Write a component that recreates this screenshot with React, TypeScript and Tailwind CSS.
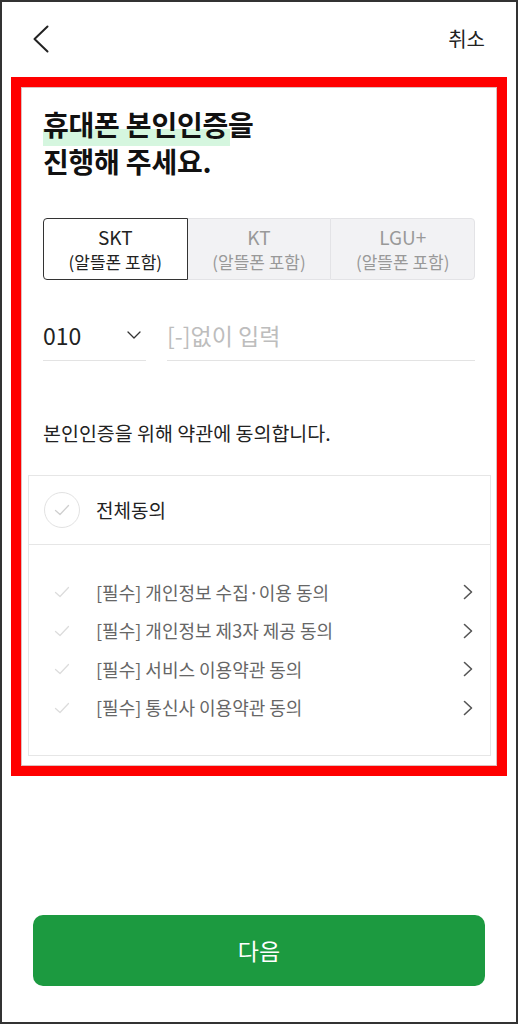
import React from "react";

const font = { fontFamily: '"Noto Sans CJK KR", "Noto Sans", sans-serif' };

function Check({ className = "" }: { className?: string }) {
  return (
    <svg viewBox="0 0 16 12" className={className} fill="none">
      <path d="M1.5 6.5 L6 10.5 L14.5 1.5" stroke="currentColor" strokeWidth="1.3" strokeLinecap="round" strokeLinejoin="round" />
    </svg>
  );
}

function ChevronRight() {
  return (
    <svg viewBox="0 0 10 16" className="w-[10px] h-[16px] text-[#555]" fill="none">
      <path d="M1.5 1.5 L8.5 8 L1.5 14.5" stroke="currentColor" strokeWidth="1.6" strokeLinecap="round" strokeLinejoin="round" />
    </svg>
  );
}

const terms = [
  "[필수] 개인정보 수집·이용 동의",
  "[필수] 개인정보 제3자 제공 동의",
  "[필수] 서비스 이용약관 동의",
  "[필수] 통신사 이용약관 동의",
];

export default function App() {
  return (
    <div className="w-[518px] h-[1024px] border-2 border-[#333] bg-white flex flex-col" style={font}>
      {/* header */}
      <div className="h-[75px] flex items-center justify-between pl-[30px] pr-[31px] pb-[2px]">
        <svg viewBox="0 0 18 28" className="w-[18px] h-[28px] text-[#222]" fill="none">
          <path d="M15.5 1.5 L2.5 14 L15.5 26.5" stroke="currentColor" strokeWidth="2" strokeLinecap="round" strokeLinejoin="round" />
        </svg>
        <span className="text-[20px] text-[#222] leading-none">취소</span>
      </div>

      {/* red annotation box */}
      <div className="mx-[9px] border-[10px] border-[#ff0000] h-[699px] flex flex-col shadow-[inset_0_0_0_1px_rgba(120,0,0,0.25)]">
        <div className="pl-[22px] pr-[22px] pt-[19px]">
          <h1 className="text-[28px] font-bold leading-[37px] text-[#111] tracking-[-0.2px]">
            <span className="relative inline-block">
              <span className="absolute left-0 right-[-2px] bottom-[-3px] h-[17px] bg-[#d5f6df]" />
              <span className="relative">휴대폰 본인인증</span>
            </span>
            을
            <br />
            진행해 주세요.
          </h1>

          {/* carrier tabs */}
          <div className="mt-[38px] flex h-[62px]">
            <div className="flex-1 flex flex-col items-center justify-center border border-[#333] rounded-l-[4px] bg-white text-[#222]">
              <span className="text-[19px] leading-[25px]">SKT</span>
              <span className="text-[17px] leading-[25px]">(알뜰폰 포함)</span>
            </div>
            <div className="flex-1 flex flex-col items-center justify-center border-y border-[#e3e3e6] bg-[#f2f2f4] text-[#999]">
              <span className="text-[19px] leading-[25px]">KT</span>
              <span className="text-[17px] leading-[25px]">(알뜰폰 포함)</span>
            </div>
            <div className="flex-1 flex flex-col items-center justify-center border border-[#e3e3e6] rounded-r-[4px] bg-[#f2f2f4] text-[#999]">
              <span className="text-[19px] leading-[25px]">LGU+</span>
              <span className="text-[17px] leading-[25px]">(알뜰폰 포함)</span>
            </div>
          </div>

          {/* phone */}
          <div className="mt-[30px] flex gap-[21px]">
            <div className="w-[103px] h-[51px] border-b border-[#e3e3e3] flex items-center justify-between pr-[5px]">
              <span className="text-[23px] text-[#222]">010</span>
              <svg viewBox="0 0 14 8" className="w-[14px] h-[8px] text-[#333]" fill="none">
                <path d="M1 1 L7 7 L13 1" stroke="currentColor" strokeWidth="1.3" strokeLinecap="round" strokeLinejoin="round" />
              </svg>
            </div>
            <div className="flex-1 h-[51px] border-b border-[#e3e3e3] flex items-center">
              <span className="text-[23px] text-[#bdbdbd]">[-]없이 입력</span>
            </div>
          </div>

          <p className="mt-[59px] text-[19.5px] text-[#222] leading-[26px]">본인인증을 위해 약관에 동의합니다.</p>
        </div>

        {/* agreement box */}
        <div className="mt-[29px] ml-[7px] mr-[6px] mb-[10px] flex-1 border border-[#e6e6e6] flex flex-col">
          <div className="h-[69px] border-b border-[#e6e6e6] flex items-center pl-[15px] gap-[16px]">
            <div className="w-[36px] h-[36px] rounded-full border border-[#e2e2e2] flex items-center justify-center">
              <Check className="w-[16px] h-[12px] text-[#cfcfcf]" />
            </div>
            <span className="text-[19px] text-[#222]">전체동의</span>
          </div>
          <div className="pt-[28px] flex flex-col">
            {terms.map((t) => (
              <div key={t} className="h-[38.5px] flex items-center pl-[25px] pr-[17px]">
                <Check className="w-[16px] h-[12px] text-[#dcdcdc]" />
                <span className="ml-[26px] flex-1 text-[18px] text-[#666]">{t}</span>
                <ChevronRight />
              </div>
            ))}
          </div>
        </div>
      </div>

      <div className="flex-1" />
      <button className="mx-[31px] mb-[36px] h-[71px] rounded-[10px] bg-[#1c9a40] text-white text-[23px]">다음</button>
    </div>
  );
}
